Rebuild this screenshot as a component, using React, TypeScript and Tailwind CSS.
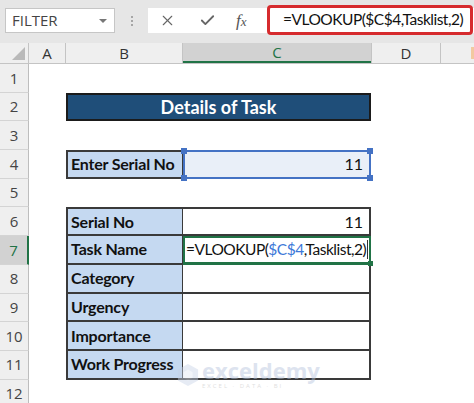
import { LuX, LuCheck } from "react-icons/lu";

const ROW_H = "h-[28.7px]";
const cellFont = { fontFamily: "Lato, 'Noto Sans', sans-serif" };
const uiFont = { fontFamily: "'Open Sans', 'Noto Sans', sans-serif" };

function RowHead({ n, active }: { n: number; active?: boolean }) {
  return (
    <div
      className={`${ROW_H} w-[29px] shrink-0 flex items-center justify-center text-[15px] border-b border-[#d4d4d4] ${
        active
          ? "bg-[#d2d2d2] text-[#217346] border-r-2 border-r-[#217346]"
          : "bg-[#efefef] text-[#444] border-r border-r-[#bdbdbd]"
      }`}
      style={uiFont}
    >
      {n}
    </div>
  );
}

function Row({
  n,
  active,
  children,
}: {
  n: number;
  active?: boolean;
  children?: React.ReactNode;
}) {
  return (
    <div className={`flex ${ROW_H}`}>
      <RowHead n={n} active={active} />
      <div className="w-[37px] shrink-0" />
      {children}
    </div>
  );
}

function Label({ text, top }: { text: string; top?: boolean }) {
  return (
    <div
      className={`w-[117px] shrink-0 bg-[#c5d9f1] border-l-2 border-b-2 border-r border-[#3a3a3a] ${
        top ? "border-t-2" : ""
      } flex items-center pl-[3px] text-[16px] tracking-[-0.2px] font-bold text-[#111] whitespace-nowrap`}
      style={cellFont}
    >
      {text}
    </div>
  );
}

function Value({ text, top }: { text?: string; top?: boolean }) {
  return (
    <div
      className={`w-[188px] shrink-0 bg-white border-r-2 border-b-2 border-[#3a3a3a] ${
        top ? "border-t-2" : ""
      } flex items-center justify-end pr-[6px] text-[16px] text-[#111]`}
      style={cellFont}
    >
      {text}
    </div>
  );
}

export default function App() {
  return (
    <div className="w-[474px] h-[403px] overflow-hidden bg-white relative">
      {/* formula toolbar */}
      <div className="h-[43px] bg-[#e6e6e6] flex items-start pt-[8px] relative">
        <div
          className="ml-[5px] w-[110px] h-[25px] bg-white border border-[#c6c6c6] flex items-center justify-between pl-[6px] pr-[7px] text-[15px] text-[#444]"
          style={uiFont}
        >
          <span>FILTER</span>
          <span className="w-0 h-0 border-l-[4px] border-r-[4px] border-t-[4px] border-l-transparent border-r-transparent border-t-[#777]" />
        </div>
        <div className="w-[33px] h-[25px] flex flex-col items-center justify-center gap-[2px]">
          <span className="w-[2px] h-[2px] bg-[#a6a6a6]" />
          <span className="w-[2px] h-[2px] bg-[#a6a6a6]" />
          <span className="w-[2px] h-[2px] bg-[#a6a6a6]" />
        </div>
        <div className="flex-1 h-[25px] bg-white flex items-center text-[#666]">
          <LuX className="ml-[11px]" size={17} strokeWidth={1.6} />
          <LuCheck className="ml-[23px]" size={17} strokeWidth={2.6} />
          <span
            className="ml-[20px] text-[17px] italic text-[#555]"
            style={{ fontFamily: "'Liberation Serif', serif" }}
          >
            f<span className="text-[13px]">x</span>
          </span>
        </div>
        <div
          className="absolute left-[267px] top-[5px] w-[206px] h-[30px] border-[3px] border-[#d62b2e] rounded-[4px] bg-white flex items-center pl-[13px] text-[15.5px] tracking-[-0.5px] text-[#111] whitespace-nowrap"
          style={cellFont}
        >
          =VLOOKUP($C$4,Tasklist,2)
        </div>
      </div>

      {/* column header */}
      <div
        className="h-[21px] flex bg-[#efefef] border-b border-[#c4c4c4] text-[15px] text-[#333]"
        style={uiFont}
      >
        <div className="w-[29px] shrink-0 border-r border-[#c4c4c4] relative">
          <svg className="absolute right-[3px] bottom-[3px]" width="13" height="13" viewBox="0 0 13 13">
            <path d="M13 0 L13 13 L0 13 Z" fill="#b9b9b9" />
          </svg>
        </div>
        <div className="w-[37px] shrink-0 border-r border-[#c4c4c4] flex items-center justify-center">
          A
        </div>
        <div className="w-[117px] shrink-0 border-r border-[#c4c4c4] flex items-center justify-center">
          B
        </div>
        <div className="w-[188px] shrink-0 bg-[#d2d2d2] border-b-2 border-[#217346] text-[#217346] flex items-center justify-center">
          C
        </div>
        <div className="w-[70px] shrink-0 border-l border-r border-[#c4c4c4] flex items-center justify-center">
          D
        </div>
        <div className="flex-1 relative">
          <div className="absolute right-0 top-[4px] w-[3px] h-[12px] bg-[#f2c9a0]" />
        </div>
      </div>

      {/* sheet rows */}
      <div className="flex flex-col">
        <Row n={1} />
        <Row n={2}>
          <div
            className="w-[305px] shrink-0 bg-[#1f4e79] border-2 border-[#1b1b1b] flex items-center justify-center text-white text-[18px] font-bold"
            style={cellFont}
          >
            Details of Task
          </div>
        </Row>
        <Row n={3} />
        <Row n={4}>
          <Label text="Enter Serial No" top />
          <div
            className="w-[188px] shrink-0 relative bg-[#e9eff8] border-2 border-[#4472c4] flex items-center justify-end pr-[6px] text-[16px] text-[#111]"
            style={cellFont}
          >
            11
            <span className="absolute -left-[4px] -top-[4px] w-[6px] h-[6px] bg-[#4472c4]" />
            <span className="absolute -left-[4px] -bottom-[4px] w-[6px] h-[6px] bg-[#4472c4]" />
            <span className="absolute -right-[4px] -top-[4px] w-[6px] h-[6px] bg-[#4472c4]" />
            <span className="absolute -right-[4px] -bottom-[4px] w-[6px] h-[6px] bg-[#4472c4]" />
          </div>
        </Row>
        <Row n={5} />
        <Row n={6}>
          <Label text="Serial No" top />
          <Value text="11" top />
        </Row>
        <Row n={7} active>
          <Label text="Task Name" />
          <div
            className="w-[188px] shrink-0 relative bg-white border-2 border-[#217346] border-b-[3px] flex items-center pl-[1px] text-[15.5px] tracking-[-0.5px] text-[#111] whitespace-nowrap"
            style={cellFont}
          >
            =VLOOKUP(<span className="text-[#3c78d8]">$C$4</span>,Tasklist,2)
            <span className="w-px h-[19px] bg-[#333] ml-[1px]" />
            <span className="absolute -right-[4px] -bottom-[4px] w-[5px] h-[5px] bg-[#217346]" />
          </div>
        </Row>
        <Row n={8}>
          <Label text="Category" />
          <Value />
        </Row>
        <Row n={9}>
          <Label text="Urgency" />
          <Value />
        </Row>
        <Row n={10}>
          <Label text="Importance" />
          <Value />
        </Row>
        <Row n={11}>
          <Label text="Work Progress" />
          <Value />
        </Row>
        <Row n={12} />
      </div>

      {/* watermark */}
      <div className="absolute left-[177px] top-[359px] flex items-center gap-[3px] opacity-45 pointer-events-none">
        <svg width="22" height="24" viewBox="0 0 24 26">
          <path d="M12 1 L23 7 L23 19 L12 25 L1 19 L1 7 Z" fill="#c8d4e8" />
          <path d="M12 7 L17 10 L17 16 L12 19 L7 16 L7 10 Z" fill="#e4eaf4" />
        </svg>
        <div className="flex flex-col">
          <span
            className="text-[22px] leading-[22px] font-bold text-[#b4c3dc]"
            style={{ fontFamily: "'Open Sans', sans-serif" }}
          >
            exceldemy
          </span>
          <span
            className="text-[6px] leading-[7px] mt-[2px] tracking-[2px] text-[#b9b9b9]"
            style={{ fontFamily: "'Open Sans', sans-serif" }}
          >
            EXCEL · DATA · BI
          </span>
        </div>
      </div>
    </div>
  );
}
